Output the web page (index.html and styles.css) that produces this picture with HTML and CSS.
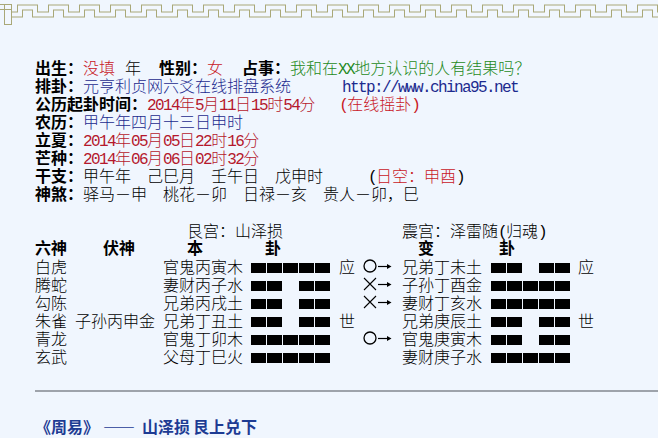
FILE: index.html
```html
<!DOCTYPE html>
<html lang="zh-CN">
<head>
<meta charset="utf-8">
<title>六爻排盘</title>
<link rel="stylesheet" href="styles.css">
</head>
<body>
<div class="border">
  <svg width="658" height="26" viewBox="0 0 658 26">
    <defs>
      <pattern id="mk" x="13" y="0" width="31" height="26" patternUnits="userSpaceOnUse">
        <path d="M-2,14.5 H7 V7.5 H22 V14.5 H33" stroke="#a9a878" stroke-width="6" fill="none"/>
        <path d="M-3,14.5 H7 V7.5 H22 V14.5 H34" stroke="#f2f7fe" stroke-width="4" fill="none"/>
      </pattern>
    </defs>
    <rect x="12" y="0" width="646" height="26" fill="url(#mk)"/>
    <rect x="4.5" y="4.5" width="7" height="20" fill="#f2f7fe" stroke="#a9a878" stroke-width="1"/>
    <path d="M0,4.5 H12 M0,9.5 H12" stroke="#a9a878" stroke-width="1"/>
  </svg>
</div>

<div class="info">
  <div class="ln"><b>出生：</b><span class="red">没填</span><span class="m10">年</span><b class="m18">性别：</b><span class="red">女</span><b class="m19">占事：</b><span class="green">我和在<span class="lat">XX</span>地方认识的人有结果吗？</span></div>
  <div class="ln"><b>排卦：</b><span class="blue">元亨利贞网六爻在线排盘系统</span><span class="lat blue m51">http://www.china95.net</span></div>
  <div class="ln"><b>公历起卦时间：</b><span class="date"><span class="num">2014</span>年<span class="num">5</span>月<span class="num">11</span>日<span class="num">15</span>时<span class="num">54</span>分</span><span class="red m24"><span class="lat">(</span>在线摇卦<span class="lat">)</span></span></div>
  <div class="ln"><b>农历：</b><span class="blue">甲午年四月十三日申时</span></div>
  <div class="ln"><b>立夏：</b><span class="date"><span class="num">2014</span>年<span class="num">05</span>月<span class="num">05</span>日<span class="num">22</span>时<span class="num">16</span>分</span></div>
  <div class="ln"><b>芒种：</b><span class="date"><span class="num">2014</span>年<span class="num">06</span>月<span class="num">06</span>日<span class="num">02</span>时<span class="num">32</span>分</span></div>
  <div class="ln"><b>干支：</b>甲午年　己巳月　壬午日　戊申时<span class="m45"><span class="lat">(</span><span class="red">日空：申酉</span><span class="lat">)</span></span></div>
  <div class="ln"><b>神煞：</b>驿马－申　桃花－卯　日禄－亥　贵人－卯，巳</div>
</div>

<div class="gua">
  <div class="row title">
    <span class="t-ben">艮宫：山泽损</span>
    <span class="t-bian">震宫：泽雷随<span class="lat">(</span>归魂<span class="lat">)</span></span>
  </div>
  <div class="row head">
    <b class="h-liu">六神</b><b class="h-fu">伏神</b><b class="h-ben">本</b><b class="h-gua">卦</b><span></span><span></span><b class="h-bian">变</b><b class="h-gua2">卦</b><span></span>
  </div>
  <div class="rows">
    <div class="row">
      <span>白虎</span><span></span><span>官鬼丙寅木</span>
      <span class="bar"><i></i><i></i><i></i><i></i><i></i></span>
      <span>应</span>
      <span class="mv"><svg width="32" height="18" viewBox="0 0 32 18"><circle cx="7" cy="9" r="6" fill="none" stroke="#000" stroke-width="1.3"/><path d="M15,9.5 H26" stroke="#000" stroke-width="1.2"/><path d="M24,7 L28.5,9.5 L24,12 Z" fill="#000"/></svg></span>
      <span>兄弟丁未土</span>
      <span class="bar"><i></i><i></i><em></em><i></i><i></i></span>
      <span>应</span>
    </div>
    <div class="row">
      <span>腾蛇</span><span></span><span>妻财丙子水</span>
      <span class="bar"><i></i><i></i><em></em><i></i><i></i></span>
      <span></span>
      <span class="mv"><svg width="32" height="18" viewBox="0 0 32 18"><path d="M1,3 L13,15 M13,3 L1,15" stroke="#000" stroke-width="1.1"/><path d="M15,9.5 H26" stroke="#000" stroke-width="1.2"/><path d="M24,7 L28.5,9.5 L24,12 Z" fill="#000"/></svg></span>
      <span>子孙丁酉金</span>
      <span class="bar"><i></i><i></i><i></i><i></i><i></i></span>
      <span></span>
    </div>
    <div class="row">
      <span>勾陈</span><span></span><span>兄弟丙戌土</span>
      <span class="bar"><i></i><i></i><em></em><i></i><i></i></span>
      <span></span>
      <span class="mv"><svg width="32" height="18" viewBox="0 0 32 18"><path d="M1,3 L13,15 M13,3 L1,15" stroke="#000" stroke-width="1.1"/><path d="M15,9.5 H26" stroke="#000" stroke-width="1.2"/><path d="M24,7 L28.5,9.5 L24,12 Z" fill="#000"/></svg></span>
      <span>妻财丁亥水</span>
      <span class="bar"><i></i><i></i><i></i><i></i><i></i></span>
      <span></span>
    </div>
    <div class="row">
      <span>朱雀</span><span>子孙丙申金</span><span>兄弟丁丑土</span>
      <span class="bar"><i></i><i></i><em></em><i></i><i></i></span>
      <span>世</span>
      <span class="mv"></span>
      <span>兄弟庚辰土</span>
      <span class="bar"><i></i><i></i><em></em><i></i><i></i></span>
      <span>世</span>
    </div>
    <div class="row">
      <span>青龙</span><span></span><span>官鬼丁卯木</span>
      <span class="bar"><i></i><i></i><i></i><i></i><i></i></span>
      <span></span>
      <span class="mv"><svg width="32" height="18" viewBox="0 0 32 18"><circle cx="7" cy="9" r="6" fill="none" stroke="#000" stroke-width="1.3"/><path d="M15,9.5 H26" stroke="#000" stroke-width="1.2"/><path d="M24,7 L28.5,9.5 L24,12 Z" fill="#000"/></svg></span>
      <span>官鬼庚寅木</span>
      <span class="bar"><i></i><i></i><em></em><i></i><i></i></span>
      <span></span>
    </div>
    <div class="row">
      <span>玄武</span><span></span><span>父母丁巳火</span>
      <span class="bar"><i></i><i></i><i></i><i></i><i></i></span>
      <span></span>
      <span class="mv"></span>
      <span>妻财庚子水</span>
      <span class="bar"><i></i><i></i><i></i><i></i><i></i></span>
      <span></span>
    </div>
  </div>
</div>

<div class="hr"></div>

<div class="zy"><b>《周易》<span class="dash">——</span>山泽损<span class="m3">艮上兑下</span></b></div>
</body>
</html>
```

FILE: styles.css
```css
html, body {
  margin: 0;
  padding: 0;
}
body {
  width: 658px;
  height: 438px;
  overflow: hidden;
  background: #f0f6fe;
  color: #000;
  font-family: "Noto Sans CJK SC", sans-serif;
  font-size: 16px;
  font-weight: 300;
  line-height: 18px;
}
b { font-weight: 700; }

.border { height: 26px; }
.border svg { display: block; }

.info { margin: 32px 0 0 35px; }
.ln { height: 18px; white-space: nowrap; }

.red { color: #c8161e; }
.date { color: #b5182c; }
.green { color: #1f8a22; }
.blue { color: #1c2a8e; }

.num, .lat {
  font-family: "Liberation Mono", monospace;
  font-size: 16px;
  font-weight: 400;
  letter-spacing: -1.6px;
}

.m3 { margin-left: 3px; }
.m10 { margin-left: 10px; }
.m18 { margin-left: 18px; }
.m19 { margin-left: 19px; }
.m24 { margin-left: 24px; }
.m45 { margin-left: 45px; }
.m51 { margin-left: 51px; }

.gua { margin: 19px 0 0 35px; }
.row {
  display: grid;
  grid-template-columns: 40px 88px 88px 88px 24px 39px 89px 87px 16px;
  height: 18px;
  white-space: nowrap;
}
.title { height: 17px; }
.t-ben { grid-column: 3 / 6; padding-left: 24px; }
.t-bian { grid-column: 7 / 10; }
.h-fu { text-align: center; }
.h-ben { padding-left: 24px; }
.h-gua { padding-left: 14px; }
.h-bian { padding-left: 16px; }
.h-gua2 { padding-left: 8px; }
.rows { margin-top: 1px; }

.bar {
  display: flex;
  gap: 1px;
  height: 10px;
  margin-top: 6px;
}
.bar i {
  display: block;
  width: 15px;
  height: 10px;
  background: #000;
}
.bar em {
  display: block;
  width: 15px;
}
.mv svg { display: block; }

.hr {
  margin: 25px 0 0 35px;
  height: 2px;
  background: #9ea3ab;
}
.zy {
  margin: 25px 0 0 35px;
  height: 18px;
  color: #1d3b93;
  white-space: nowrap;
}
.dash { letter-spacing: 7px; margin-left: 4px; }
```
